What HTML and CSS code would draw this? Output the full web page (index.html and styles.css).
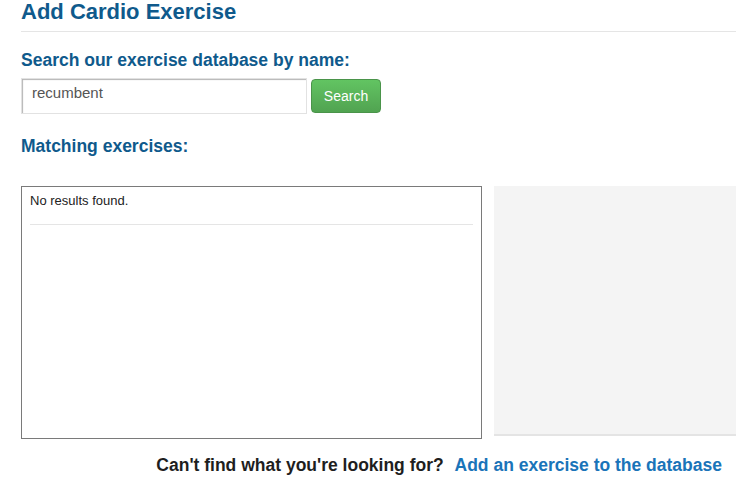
FILE: index.html
```html
<!DOCTYPE html>
<html>
<head>
<meta charset="utf-8">
<link rel="stylesheet" href="styles.css">
</head>
<body>
<div class="page">
  <h1 class="title">Add Cardio Exercise</h1>
  <h2 class="label">Search our exercise database by name:</h2>
  <div class="search-row">
    <input class="search-input" type="text" value="recumbent">
    <button class="search-btn">Search</button>
  </div>
  <h2 class="label matching">Matching exercises:</h2>
  <div class="results-row">
    <div class="results">
      <p class="no-results">No results found.</p>
      <div class="divider"></div>
    </div>
    <div class="panel"></div>
  </div>
  <p class="footer">Can't find what you're looking for? <a class="add-link" href="#">Add an exercise to the database</a></p>
</div>
</body>
</html>
```
FILE: styles.css
```css
html, body {
  margin: 0;
  padding: 0;
  background: #fff;
  overflow: hidden;
}
body {
  font-family: "Liberation Sans", Arial, sans-serif;
}
.page {
  padding-left: 21px;
}
.title {
  margin: 0;
  font-size: 22px;
  line-height: 24px;
  font-weight: bold;
  color: #0f5a8c;
  padding-bottom: 7px;
  border-bottom: 1px solid #e5e5e5;
}
.label {
  margin: 18px 0 0;
  font-size: 17.5px;
  line-height: 20px;
  font-weight: bold;
  color: #0f5a8c;
}
.search-row {
  display: flex;
  align-items: flex-start;
  margin-top: 8px;
}
.search-input {
  box-sizing: border-box;
  width: 286px;
  height: 36px;
  margin: 0;
  padding: 1px 10px 9px;
  border: 1px solid #e2e2e2;
  box-shadow: inset 2px 2px 1px -1px #b5b5b5;
  font-family: "Liberation Sans", Arial, sans-serif;
  font-size: 15px;
  color: #555;
  outline: none;
  background: #fff;
}
.search-btn {
  box-sizing: border-box;
  width: 70px;
  height: 34px;
  margin: 1px 0 0 4px;
  padding: 0;
  border: 1px solid #4a944a;
  border-radius: 4px;
  background: linear-gradient(#62c462, #51a351);
  color: #fff;
  font-family: "Liberation Sans", Arial, sans-serif;
  font-size: 14px;
}
.matching {
  margin-top: 22px;
}
.results-row {
  display: flex;
  align-items: flex-start;
  margin-top: 30px;
}
.results {
  box-sizing: border-box;
  width: 461px;
  height: 253px;
  border: 1px solid #7a7a7a;
  padding: 5px 8px 0;
}
.no-results {
  margin: 0;
  font-size: 13px;
  line-height: 18px;
  color: #222;
}
.divider {
  margin-top: 14px;
  border-top: 1px solid #e5e5e5;
}
.panel {
  flex: 1;
  margin-left: 12px;
  height: 248px;
  background: #f4f4f4;
  border-bottom: 2px solid #e4e4e4;
}
.footer {
  margin: 16px 0 0;
  padding-right: 14px;
  text-align: right;
  font-size: 17.5px;
  line-height: 20px;
  font-weight: bold;
  color: #1e1e1e;
}
.add-link {
  margin-left: 6px;
  color: #1a74b9;
  text-decoration: none;
}
```
